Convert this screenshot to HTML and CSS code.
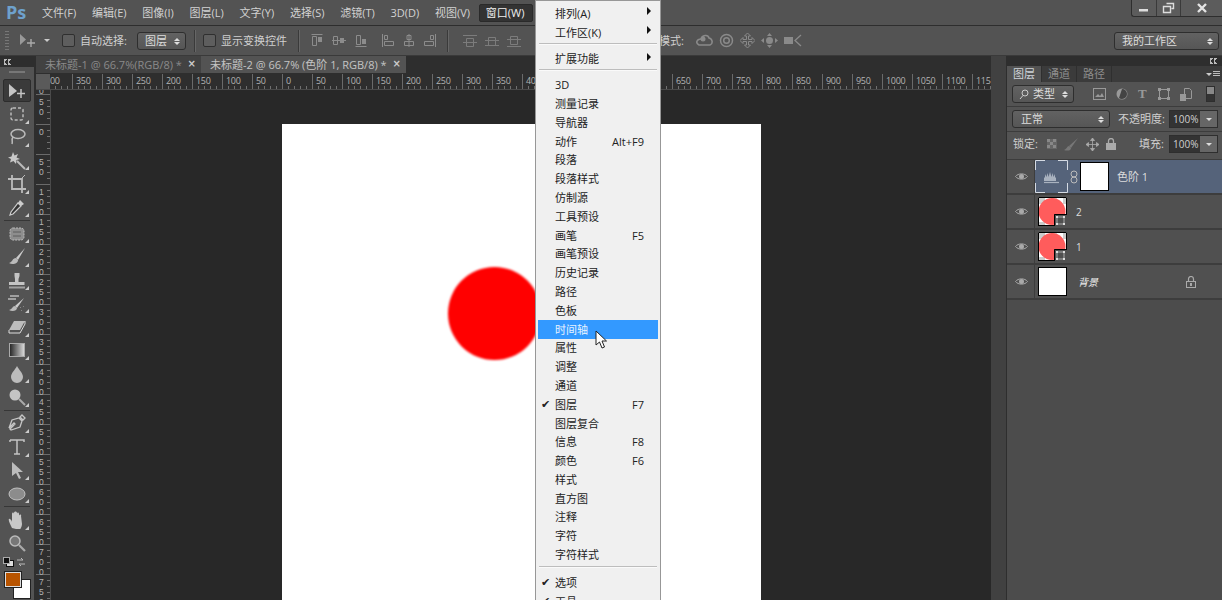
FILE: index.html
```html
<!DOCTYPE html>
<html lang="zh">
<head>
<meta charset="utf-8">
<title>Photoshop</title>
<link rel="stylesheet" href="styles.css">
</head>
<body>
<div class="app">
  <header class="menubar">
    <span class="logo">Ps</span>
    <nav class="menus">
      <span class="m">文件(F)</span><span class="m">编辑(E)</span><span class="m">图像(I)</span><span class="m">图层(L)</span><span class="m">文字(Y)</span><span class="m">选择(S)</span><span class="m">滤镜(T)</span><span class="m">3D(D)</span><span class="m">视图(V)</span><span class="m active">窗口(W)</span>
    </nav>
    <div class="winbtns">
      <span class="wb w1"><svg width="12" height="12" viewBox="0 0 12 12"><rect x="1" y="7" width="9" height="2.500" fill="#ddd"/></svg></span>
      <span class="wb w2"><svg width="13" height="12" viewBox="0 0 13 12"><path d="M4.500 1.500h7v5h-2M1.500 4.500h7v6h-7z" fill="none" stroke="#ddd" stroke-width="1.400"/></svg></span>
      <span class="wb w3"><svg width="12" height="12" viewBox="0 0 12 12"><path d="M2 2l8 8M10 2l-8 8" stroke="#e4e4e4" stroke-width="2.400"/></svg></span>
    </div>
  </header>

  <section class="options">
    <span class="grip"></span>
    <svg class="opt-move" width="18" height="16" viewBox="0 0 18 16"><path d="M1 1l6 5.500-6 5.500z" fill="#999"/><path d="M12 6v8M8 10h8" stroke="#aaa" stroke-width="1.400"/></svg>
    <span class="caret"></span>
    <span class="check c1"></span><span class="otext">自动选择:</span>
    <span class="select s1">图层<i class="updown"></i></span>
    <span class="odiv"></span>
    <span class="check"></span><span class="otext">显示变换控件</span>
    <span class="odiv d2"></span>
    <div class="aligns">
      <svg width="12" height="13" viewBox="0 0 12 13"><path d="M0.500 0.500h11M1.500 2.500h4v9h-4z" fill="none" stroke="#8c8c8c"/><rect x="7" y="3" width="4" height="5" fill="#8c8c8c"/></svg>
      <svg width="14" height="13" viewBox="0 0 14 13"><path d="M1.500 2.500h4v8h-4zM0 6.500h14" fill="none" stroke="#8c8c8c"/><rect x="8" y="4" width="4" height="5" fill="#8c8c8c"/></svg>
      <svg width="12" height="13" viewBox="0 0 12 13"><path d="M0.500 12.500h11M1.500 1.500h4v9h-4z" fill="none" stroke="#8c8c8c"/><rect x="7" y="5" width="4" height="5" fill="#8c8c8c"/></svg>
      <svg class="g" width="12" height="13" viewBox="0 0 12 13"><path d="M0.500 0v13M2.500 1.500h3v4h-3zM2.500 7.500h9v4h-9z" fill="none" stroke="#8c8c8c"/></svg>
      <svg width="12" height="13" viewBox="0 0 12 13"><path d="M6 0v13M4 1.500h4v4h-4zM1.500 7.500h9v4h-9z" fill="none" stroke="#8c8c8c"/></svg>
      <svg width="12" height="13" viewBox="0 0 12 13"><path d="M11.500 0v13M6.500 1.500h3v4h-3zM0.500 7.500h9v4h-9z" fill="none" stroke="#8c8c8c"/></svg>
    </div>
    <span class="odiv d3"></span>
    <div class="dists">
      <svg width="14" height="12" viewBox="0 0 14 12"><path d="M0 0.500h14M0 7.500h14M3.500 3.500h7v8h-7z" fill="none" stroke="#7c7c7c"/></svg>
      <svg width="14" height="12" viewBox="0 0 14 12"><path d="M0 5.500h14M0 10.500h14M3.500 2.500h7v8h-7z" fill="none" stroke="#7c7c7c"/></svg>
      <svg width="14" height="12" viewBox="0 0 14 12"><path d="M0 4.500h14M0 11.500h14M3.500 1.500h7v8h-7z" fill="none" stroke="#7c7c7c"/></svg>
    </div>
    <span class="otext mode">模式:</span>
    <div class="modes">
      <svg width="17" height="15" viewBox="0 0 17 15"><path d="M3 12c-4-2-2-6 2-6 1-4 7-5 8-1 4 1 4 6 1 7z" fill="none" stroke="#8a8a8a" stroke-width="1.600"/><circle cx="7" cy="6" r="2.500" fill="#8a8a8a"/></svg>
      <svg width="15" height="15" viewBox="0 0 15 15"><circle cx="7.500" cy="7.500" r="6" fill="none" stroke="#8a8a8a" stroke-width="1.500"/><circle cx="7.500" cy="7.500" r="2.800" fill="none" stroke="#8a8a8a" stroke-width="1.500"/></svg>
      <svg width="15" height="15" viewBox="0 0 15 15"><path d="M7.500 0l3 3h-2v3.500h3.500v-2l3 3-3 3v-2h-3.500v3.500h2l-3 3-3-3h2v-3.500h-3.500v2l-3-3 3-3v2h3.500v-3.500h-2z" fill="none" stroke="#8a8a8a"/></svg>
      <svg width="17" height="15" viewBox="0 0 17 15"><circle cx="8.500" cy="7.500" r="3.500" fill="#8a8a8a"/><path d="M8.500 0l2.500 3h-5zM8.500 15l-2.500-3h5zM0 7.500l3-2.500v5zM17 7.500l-3-2.500v5z" fill="#8a8a8a"/></svg>
      <svg width="18" height="13" viewBox="0 0 18 13"><rect x="0" y="3" width="9" height="7" fill="#8a8a8a"/><path d="M17 1l-6 5.500 6 5.500" fill="none" stroke="#8a8a8a" stroke-width="1.300"/></svg>
    </div>
    <span class="select workspace">我的工作区<i class="updown"></i></span>
  </section>

  <div class="workarea">
    <aside class="toolbar">
      <div class="dock"><i class="dbl"></i></div>
      <div class="toolgrip"></div>
      <div class="tool on"><svg width="20" height="16" viewBox="0 0 20 16"><path d="M2 1l8 7-8 6z" fill="#c4c4c4"/><path d="M14 6v9M10 10.500h8" stroke="#c4c4c4" stroke-width="1.500"/></svg></div>
      <div class="tool more"><svg width="16" height="16" viewBox="0 0 16 16"><rect x="2" y="2" width="12" height="12" rx="2" fill="none" stroke="#bbb" stroke-width="1.500" stroke-dasharray="3 2"/></svg></div>
      <div class="tool more"><svg width="18" height="18" viewBox="0 0 18 18"><ellipse cx="10" cy="6" rx="7" ry="4.500" fill="none" stroke="#bbb" stroke-width="1.500"/><path d="M5 9c-2 3 0 4-1 7" fill="none" stroke="#bbb" stroke-width="1.500"/></svg></div>
      <div class="tool more"><svg width="20" height="20" viewBox="0 0 20 20"><path d="M6 1l1.500 3.500L11 3 9.500 6.500 13 8l-3.500 1L9 13 6.500 10 3 11.500 4 8 1 6.500 4.500 5.500z" fill="#c8c8c8"/><path d="M10 10l8 8" stroke="#bbb" stroke-width="2"/></svg></div>
      <div class="tool more"><svg width="18" height="18" viewBox="0 0 18 18"><path d="M4 0v14h14M0 4h14v14" fill="none" stroke="#bbb" stroke-width="1.800"/><path d="M14 3l3-3" stroke="#bbb"/></svg></div>
      <div class="tool more"><svg width="18" height="18" viewBox="0 0 18 18"><path d="M12 2l4 4-3 2-3-3z" fill="#ccc"/><path d="M10 5l3 3-8 8-3 1 1-3z" fill="#333" stroke="#ccc" stroke-width="1.200"/></svg></div>
      <div class="toolsep"></div>
      <div class="tool more"><svg width="18" height="16" viewBox="0 0 18 16"><rect x="2" y="2" width="14" height="12" rx="3" fill="#8d8d8d" stroke="#bbb" stroke-dasharray="2 1"/><path d="M5 6h8M5 10h8" stroke="#5c5c5c"/></svg></div>
      <div class="tool more"><svg width="20" height="20" viewBox="0 0 20 20"><path d="M18 1L9 11l2 2z" fill="#ccc"/><path d="M9 11c-4 0-3 4-7 5 3 2 9 1 9-3z" fill="#bbb"/></svg></div>
      <div class="tool more"><svg width="18" height="19" viewBox="0 0 18 19"><path d="M6.500 2h5v3l-1 3v3h6v3H1v-3h6V8L6.500 5z" fill="#c4c4c4"/><rect x="1" y="15.500" width="16" height="2" fill="#a0a0a0"/></svg></div>
      <div class="tool more"><svg width="20" height="18" viewBox="0 0 20 18"><path d="M3 1h9M1 4h8" stroke="#bbb" stroke-width="1.500"/><path d="M17 3L8 11l2 2z" fill="#ccc"/><path d="M8 11c-3 0-2 3-6 4 3 2 8 1 8-2z" fill="#bbb"/><path d="M13 12l1 1m2-2l1 1m-3 3l1 1" stroke="#888"/></svg></div>
      <div class="tool more"><svg width="20" height="16" viewBox="0 0 20 16"><path d="M7 2h11l-5 9H2z" fill="#bdbdbd"/><path d="M2 11l0 3h11l5-9v-3" fill="none" stroke="#ddd"/></svg></div>
      <div class="tool more"><svg width="16" height="14" viewBox="0 0 16 14"><defs><linearGradient id="gr"><stop offset="0" stop-color="#222"/><stop offset="1" stop-color="#ddd"/></linearGradient></defs><rect x="0.500" y="0.500" width="15" height="13" fill="url(#gr)" stroke="#aaa"/></svg></div>
      <div class="tool more"><svg width="14" height="18" viewBox="0 0 14 18"><path d="M7 1c2 4 6 7 6 11a6 6 0 0 1-12 0c0-4 4-7 6-11z" fill="#bcbcbc"/></svg></div>
      <div class="tool more"><svg width="18" height="18" viewBox="0 0 18 18"><circle cx="7" cy="7" r="5.500" fill="#c4c4c4"/><path d="M11 11l6 6" stroke="#aaa" stroke-width="2"/></svg></div>
      <div class="toolsep"></div>
      <div class="tool more"><svg width="18" height="18" viewBox="0 0 18 18"><path d="M14 1l3 3-2 2-3-3zM11 4l3 3-2 6-9 3-1-1 5-5-1-1-5 5 0 0 3-8z" fill="none" stroke="#c6c6c6" stroke-width="1.300"/></svg></div>
      <div class="tool more"><svg width="18" height="18" viewBox="0 0 18 18"><path d="M2 2h14v2M2 2v2M9 2v14M6 16h6" fill="none" stroke="#c4c4c4" stroke-width="1.500"/></svg></div>
      <div class="tool more"><svg width="14" height="18" viewBox="0 0 14 18"><path d="M2 1l11 10-5 0 3 6-2 1-3-6-4 3z" fill="#bcbcbc"/></svg></div>
      <div class="tool more"><svg width="18" height="14" viewBox="0 0 18 14"><ellipse cx="9" cy="7" rx="8" ry="6" fill="#8c8c8c" stroke="#c0c0c0"/></svg></div>
      <div class="toolsep"></div>
      <div class="tool more"><svg width="18" height="18" viewBox="0 0 18 18"><path d="M4 17C2 13 0 9 1 8s3 2 3 3V3c0-2 2-2 2 0v4-5c0-2 3-2 3 0v5-4c0-2 2-2 2 0v5-3c0-2 3-2 2 0l1 8c0 3-2 5-2 6z" fill="#c8c8c8"/></svg></div>
      <div class="tool"><svg width="18" height="18" viewBox="0 0 18 18"><circle cx="7" cy="7" r="5" fill="#777" stroke="#bbb" stroke-width="1.500"/><path d="M11 11l6 6" stroke="#aaa" stroke-width="2.200"/></svg></div>
      <div class="minis">
        <svg width="11" height="10" viewBox="0 0 11 10"><rect x="3.500" y="3.500" width="7" height="6" fill="#ddd" stroke="#111"/><rect x="0.500" y="0.500" width="6" height="6" fill="#111" stroke="#aaa"/></svg>
        <svg width="10" height="10" viewBox="0 0 10 10"><path d="M1 3h6l-2-2M9 7H3l2 2" fill="none" stroke="#bbb"/></svg>
      </div>
      <div class="swatches"><span class="fg"></span><span class="bg"></span></div>
    </aside>

    <main class="doc">
      <div class="tabs">
        <span class="tab">未标题-1 @ 66.7%(RGB/8) *<b>×</b></span>
        <span class="tab cur">未标题-2 @ 66.7% (色阶 1, RGB/8) *<b>×</b></span>
      </div>
      <div class="ruler-row">
        <span class="corner"></span>
        <div class="hruler">
          <span class="stub">00</span><span>350</span><span>300</span><span>250</span><span>200</span><span>150</span><span>100</span><span>50</span><span>0</span><span>50</span><span>100</span><span>150</span><span>200</span><span>250</span><span>300</span><span>350</span><span>40</span><span></span><span></span><span></span><span></span><span>650</span><span>700</span><span>750</span><span>800</span><span>850</span><span>900</span><span>950</span><span>1000</span><span>1050</span><span>1100</span><span>115</span>
        </div>
      </div>
      <div class="stage">
        <div class="vruler">
          <span class="stub">0</span><span>5<br>0</span><span>0</span><span>5<br>0</span><span>1<br>0<br>0</span><span>1<br>5<br>0</span><span>2<br>0<br>0</span><span>2<br>5<br>0</span><span>3<br>0<br>0</span><span>3<br>5<br>0</span><span>4<br>0<br>0</span><span>4<br>5<br>0</span><span>5<br>0<br>0</span><span>5<br>5<br>0</span><span>6<br>0<br>0</span><span>6<br>5<br>0</span><span>7<br>0<br>0</span><span>7<br>5<br>0</span>
        </div>
        <div class="canvas">
          <div class="page"><span class="circle"></span></div>
        </div>
      </div>
    </main>

    <div class="gutter"></div>

    <aside class="panel">
      <div class="dock right"><i class="dbl"></i></div>
      <div class="ptabs">
        <span class="ptab cur">图层</span><span class="ptab">通道</span><span class="ptab">路径</span>
        <span class="pmenu"><i></i><u></u></span>
      </div>
      <div class="prow filter">
        <span class="select fsel"><svg width="10" height="11" viewBox="0 0 10 11"><circle cx="6" cy="4" r="3" fill="none" stroke="#ccc"/><path d="M4 6.500L1 10" stroke="#ccc"/></svg><em>类型</em><i class="updown"></i></span>
        <div class="ficons">
          <svg width="13" height="12" viewBox="0 0 13 12"><rect x="0.500" y="0.500" width="12" height="11" fill="none" stroke="#999"/><path d="M2 9l3-3 2 2 2-3 2 4z" fill="#999"/></svg>
          <svg width="12" height="12" viewBox="0 0 12 12"><circle cx="6" cy="6" r="5.500" fill="#999"/><path d="M6 1a5 5 0 0 1 0 10 6 6 0 0 1-3-1z" fill="#444"/></svg>
          <span class="ft">T</span>
          <svg width="12" height="12" viewBox="0 0 12 12"><path d="M1.500 1.500h9v9h-9z" fill="none" stroke="#999"/><path d="M0 0h3v3H0zM9 0h3v3H9zM0 9h3v3H0zM9 9h3v3H9z" fill="#999"/></svg>
          <svg width="12" height="13" viewBox="0 0 12 13"><path d="M4.500 0.500h5l2 2v8h-7z" fill="none" stroke="#999"/><rect x="0" y="6" width="6" height="7" fill="#999"/></svg>
        </div>
        <span class="toggle"><i></i><i></i></span>
      </div>
      <div class="prow blend">
        <span class="select bsel">正常<i class="updown"></i></span>
        <span class="plabel">不透明度:</span>
        <span class="num">100%<i></i></span>
      </div>
      <div class="prow lock">
        <span class="plabel">锁定:</span>
        <div class="licons">
          <svg width="10" height="10" viewBox="0 0 10 10"><rect width="10" height="10" fill="#666"/><path d="M0 0h3v3H0zM6 0h3v3H6zM3 3h3v3H3zM0 6h3v3H0zM6 6h3v3H6z" fill="#888"/></svg>
          <svg width="15" height="13" viewBox="0 0 15 13"><path d="M14 0L5 8l2 2z" fill="#777"/><path d="M5 8c-2 0-2 3-5 4 3 1 7 1 7-2z" fill="#777"/></svg>
          <svg width="13" height="13" viewBox="0 0 13 13"><path d="M6.500 0v13M0 6.500h13M6.500 0l-2 2.500h4zM6.500 13l-2-2.500h4zM0 6.500l2.500-2v4zM13 6.500l-2.500-2v4z" fill="#aaa" stroke="#aaa" stroke-width="0.800"/></svg>
          <svg width="10" height="12" viewBox="0 0 10 12"><path d="M2.500 5V3a2.500 2.500 0 0 1 5 0v2" fill="none" stroke="#aaa" stroke-width="1.300"/><rect y="5" width="10" height="7" fill="#aaa"/></svg>
        </div>
        <span class="plabel fill">填充:</span>
        <span class="num">100%<i></i></span>
      </div>
      <div class="layers">
        <div class="layer sel">
          <span class="eye"><svg width="13" height="9" viewBox="0 0 13 9"><path d="M0.500 4.500C3 1 10 1 12.500 4.500 10 8 3 8 0.500 4.500z" fill="none" stroke="#aaa"/><circle cx="6.500" cy="4.500" r="2.500" fill="#aaa"/></svg></span>
          <span class="adj"><svg width="33" height="33" viewBox="0 0 33 33"><path d="M0.500 10V0.500H10M23 0.500h9.500V10M32.500 23v9.500H23M10 32.500H0.500V23" fill="none" stroke="#d5dbe4"/><path d="M9 21V17l1 1v-4l1.500 3 1-4 1 4 1.500-5 1.500 5 1-4 1 4 1.500-3v4l1-1v4z" fill="#a9b2bf"/><path d="M9 22.500h15" stroke="#a9b2bf" stroke-width="1.200"/></svg></span>
          <span class="link"><svg width="8" height="14" viewBox="0 0 8 14"><rect x="1" y="1" width="6" height="6" rx="3" fill="none" stroke="#bbb"/><rect x="1" y="7" width="6" height="6" rx="3" fill="none" stroke="#bbb"/></svg></span>
          <span class="mask"></span>
          <span class="lname n1">色阶 1</span>
        </div>
        <div class="layer">
          <span class="eye"><svg width="13" height="9" viewBox="0 0 13 9"><path d="M0.500 4.500C3 1 10 1 12.500 4.500 10 8 3 8 0.500 4.500z" fill="none" stroke="#aaa"/><circle cx="6.500" cy="4.500" r="2.500" fill="#aaa"/></svg></span>
          <svg class="thumb" width="29" height="29" viewBox="0 0 29 29"><rect width="29" height="29" fill="#fff"/><path d="M1 1h6v6H1zM13 1h6v6h-6zM25 1h3v6h-3zM7 7h6v6H7zM1 13h6v6H1zM1 25h6v3H1z" fill="#ccc"/><circle cx="14" cy="14.500" r="13.500" fill="#ff5c5c"/><path d="M29 29H16V17h13z" fill="#505050"/><path d="M16.500 29V17.500H29" fill="none" stroke="#000"/><rect x="19" y="20" width="7" height="7" fill="none" stroke="#aaa"/><path d="M18 19h2v2h-2zM25 19h2v2h-2zM18 26h2v2h-2zM25 26h2v2h-2z" fill="#ddd"/><path d="M0.500 29V0.500H28.500V17M16 28.500H0.500" fill="none" stroke="#000"/></svg>
          <span class="lname">2</span>
        </div>
        <div class="layer">
          <span class="eye"><svg width="13" height="9" viewBox="0 0 13 9"><path d="M0.500 4.500C3 1 10 1 12.500 4.500 10 8 3 8 0.500 4.500z" fill="none" stroke="#aaa"/><circle cx="6.500" cy="4.500" r="2.500" fill="#aaa"/></svg></span>
          <svg class="thumb" width="29" height="29" viewBox="0 0 29 29"><rect width="29" height="29" fill="#fff"/><path d="M1 1h6v6H1zM13 1h6v6h-6zM25 1h3v6h-3zM7 7h6v6H7zM1 13h6v6H1zM1 25h6v3H1z" fill="#ccc"/><circle cx="14" cy="14.500" r="13.500" fill="#ff5c5c"/><path d="M29 29H16V17h13z" fill="#505050"/><path d="M16.500 29V17.500H29" fill="none" stroke="#000"/><rect x="19" y="20" width="7" height="7" fill="none" stroke="#aaa"/><path d="M18 19h2v2h-2zM25 19h2v2h-2zM18 26h2v2h-2zM25 26h2v2h-2z" fill="#ddd"/><path d="M0.500 29V0.500H28.500V17M16 28.500H0.500" fill="none" stroke="#000"/></svg>
          <span class="lname">1</span>
        </div>
        <div class="layer">
          <span class="eye"><svg width="13" height="9" viewBox="0 0 13 9"><path d="M0.500 4.500C3 1 10 1 12.500 4.500 10 8 3 8 0.500 4.500z" fill="none" stroke="#aaa"/><circle cx="6.500" cy="4.500" r="2.500" fill="#aaa"/></svg></span>
          <span class="bgthumb"></span>
          <span class="lname ital">背景</span>
          <svg class="padlock" width="10" height="12" viewBox="0 0 10 12"><path d="M2.500 5V3a2.500 2.500 0 0 1 5 0v2" fill="none" stroke="#aaa" stroke-width="1.200"/><rect x="0.500" y="5.500" width="9" height="6" fill="none" stroke="#aaa"/><rect x="4" y="7" width="2" height="3" fill="#aaa"/></svg>
        </div>
      </div>
    </aside>
  </div>

  <div class="menu">
    <div class="mi sub">排列(A)<i class="arr"></i></div>
    <div class="mi sub">工作区(K)<i class="arr"></i></div>
    <div class="msep a"></div>
    <div class="mi sub">扩展功能<i class="arr"></i></div>
    <div class="msep b"></div>
    <div class="mi">3D</div>
    <div class="mi">测量记录</div>
    <div class="mi">导航器</div>
    <div class="mi">动作<kbd>Alt+F9</kbd></div>
    <div class="mi">段落</div>
    <div class="mi">段落样式</div>
    <div class="mi">仿制源</div>
    <div class="mi">工具预设</div>
    <div class="mi">画笔<kbd>F5</kbd></div>
    <div class="mi">画笔预设</div>
    <div class="mi">历史记录</div>
    <div class="mi">路径</div>
    <div class="mi">色板</div>
    <div class="mi hot">时间轴</div>
    <div class="mi">属性</div>
    <div class="mi">调整</div>
    <div class="mi">通道</div>
    <div class="mi on">图层<kbd>F7</kbd></div>
    <div class="mi">图层复合</div>
    <div class="mi">信息<kbd>F8</kbd></div>
    <div class="mi">颜色<kbd>F6</kbd></div>
    <div class="mi">样式</div>
    <div class="mi">直方图</div>
    <div class="mi">注释</div>
    <div class="mi">字符</div>
    <div class="mi">字符样式</div>
    <div class="msep a end"></div>
    <div class="mi on">选项</div>
    <div class="mi on">工具</div>
  </div>
  <svg class="cursor" width="14" height="20" viewBox="0 0 14 20"><path d="M1 1v14l3.500-3 2.500 6 2.500-1-2.500-6h4.500z" fill="#fff" stroke="#222"/></svg>
</div>
</body>
</html>
```
FILE: styles.css
```css
* { box-sizing: border-box; }
html, body { margin: 0; height: 100%; overflow: hidden; background: #535353; }
body { font: 11px/1.2 "Open Sans", "Noto Sans CJK SC", sans-serif; color: #d2d2d2; }
svg { display: block; flex: none; }

.app { position: relative; width: 1222px; height: 600px; overflow: hidden; display: flex; flex-direction: column; }

/* menu bar */
.menubar { height: 26px; flex: none; display: flex; align-items: flex-start; background: #535353; border-bottom: 1px solid #2e2e2e; }
.logo { width: 34px; padding: 2px 0 0 6px; font: bold 18px/20px "Open Sans", sans-serif; color: #6ea1cc; }
.menus { display: flex; padding-top: 4px; padding-left: 1px; }
.m { margin-right: 8.750px; padding: 2px 0 0 7px; height: 18px; font-size: 11px; line-height: 14px; white-space: nowrap; }
.m.active { margin: 0; padding: 1px 0 0 6px; background: #333; border: 1px solid #2a2a2a; border-radius: 2px; color: #eee; width: 54px; }
.winbtns { margin-left: auto; display: flex; height: 17px; border: 1px solid #2e2e2e; border-top: 0; border-right: 0; border-radius: 0 0 0 3px; background: #5c5c5c; }
.wb { display: flex; align-items: center; justify-content: center; border-right: 1px solid #3a3a3a; }
.w1 { width: 25px; } .w2 { width: 24px; } .w3 { width: 41px; border-right: 0; }

/* options */
.options { height: 30px; flex: none; display: flex; align-items: center; background: #535353; border-bottom: 1px solid #3a3a3a; padding-left: 5px; }
.grip { width: 4px; height: 20px; margin-right: 10px; background: repeating-linear-gradient(#777 0 1px, transparent 1px 3px); }
.opt-move { margin-right: 7px; }
.caret { width: 0; height: 0; border: 3px solid transparent; border-top: 3px solid #ccc; border-bottom: 0; margin-right: 12px; }
.check { width: 13px; height: 13px; flex: none; margin-right: 5px; border: 1px solid #2f2f2f; border-radius: 2px; background: #5e5e5e; }
.otext { font-size: 11px; white-space: nowrap; color: #d0d0d0; }
.select { position: relative; display: flex; align-items: center; height: 18px; flex: none; border: 1px solid #2e2e2e; border-radius: 3px; background: linear-gradient(#626262, #565656); color: #ddd; white-space: nowrap; }
.updown { position: absolute; right: 5px; top: 4px; width: 6px; height: 9px; }
.updown::before, .updown::after { content: ""; position: absolute; left: 0; border: 3px solid transparent; }
.updown::before { top: -2px; border-bottom-color: #ddd; }
.updown::after { bottom: -2px; border-top-color: #ddd; }
.s1 { width: 49px; margin-left: 10px; padding-left: 7px; }
.odiv { height: 22px; background: #3a3a3a; border-right: 1px solid #666; width: 2px; margin: 0 7px 0 8px; }
.d2 { margin: 0 11px 0 11px; }
.aligns { display: flex; gap: 9px; align-items: center; }
.aligns .g { margin-left: 6px; }
.d3 { margin: 0 14px 0 11px; }
.dists { display: flex; gap: 8px; width: 196px; }
.mode { margin-right: 12px; }
.modes { display: flex; gap: 6px; align-items: center; }
.workspace { width: 105px; margin-left: auto; margin-right: 3px; padding-left: 7px; }

/* work area */
.workarea { flex: 1; min-height: 0; display: flex; }
.toolbar { width: 36px; flex: none; background: #535353; border-right: 2px solid #2e2e2e; }
.dock { height: 11px; background: #2e2e2e; display: flex; align-items: center; padding: 0 4px; }
.dock.right { height: 10px; justify-content: flex-end; }
.dbl { width: 8px; height: 6px; background: linear-gradient(135deg, #bbb 50%, transparent 50%) 0 0 / 4px 3px no-repeat, linear-gradient(45deg, #bbb 50%, transparent 50%) 0 3px / 4px 3px no-repeat, linear-gradient(135deg, #bbb 50%, transparent 50%) 4px 0 / 4px 3px no-repeat, linear-gradient(45deg, #bbb 50%, transparent 50%) 4px 3px / 4px 3px no-repeat; }
.toolgrip { height: 12px; margin: 0 9px; background: linear-gradient(#777, #777) 0 4px / 100% 2px no-repeat; }
.tool { position: relative; height: 23.350px; display: flex; align-items: center; justify-content: center; }
.tool.on { margin: 0 3px; background: #3a3a3a; border: 1px solid #2c2c2c; border-radius: 2px; }
.tool.more::after { content: ""; position: absolute; right: 5px; bottom: 2px; border: 2px solid transparent; border-right-color: #ccc; border-bottom-color: #ccc; }
.toolsep { height: 3px; margin: 0 4px; background: linear-gradient(#363636, #363636) 0 1px / 100% 1px no-repeat; }
.minis { display: flex; justify-content: space-between; padding: 2px 8px 0 3px; }
.swatches { position: relative; height: 30px; margin-top: 3px; }
.fg { position: absolute; left: 4px; top: 1px; width: 18px; height: 17px; z-index: 1; background: #b85400; border: 1px solid #222; outline: 1px solid #ddd; outline-offset: -2px; }
.bg { position: absolute; left: 13px; top: 9px; width: 18px; height: 20px; background: #fff; border: 1px solid #222; }

/* document */
.doc { flex: none; width: 955px; display: flex; flex-direction: column; background: #282828; min-height: 0; }
.tabs { height: 18px; flex: none; display: flex; background: #2e2e2e; }
.tab { position: relative; display: flex; align-items: center; height: 17px; padding-left: 9px; width: 165px; background: #424242; color: #8a8a8a; white-space: nowrap; font-size: 11px; }
.tab.cur { width: 205px; background: #535353; color: #c4c4c4; }
.tab b { position: absolute; right: 5px; top: 1px; font: bold 10px/14px "DejaVu Sans", sans-serif; color: #ccc; }
.ruler-row { height: 16px; flex: none; display: flex; background: #2e2e2e; border-bottom: 1px solid #4a4a4a; }
.corner { width: 14px; flex: none; background: #5a5a5a; }
.hruler { flex: 1; overflow: hidden; display: flex; }
.hruler span { flex: none; width: 30px; height: 15px; padding-left: 3px; border-left: 1px solid #6a6a6a; font: 9px/13px "Open Sans", sans-serif; letter-spacing: -0.300px; color: #b4b4b4; white-space: nowrap; background: repeating-linear-gradient(90deg, transparent 0 5px, #707070 5px 6px) 0 100% / 100% 3px no-repeat; }
.hruler .stub { width: 22px; padding-left: 0; border-left: 0; }
.stage { flex: 1; min-height: 0; display: flex; }
.vruler { width: 15px; flex: none; background: #2e2e2e; border-right: 1px solid #4a4a4a; overflow: hidden; }
.vruler span { display: block; height: 30px; padding: 2px 0 0 3px; border-top: 1px solid #6a6a6a; font: 8.500px/10px "Liberation Sans", sans-serif; color: #b4b4b4; background: repeating-linear-gradient(transparent 0 5px, #707070 5px 6px) 100% 0 / 3px 100% no-repeat; }
.vruler .stub { height: 4px; padding-top: 0; border-top: 0; line-height: 3px; overflow: hidden; }
.canvas { flex: 1; background: #282828; padding: 34px 0 0 231px; overflow: hidden; }
.page { position: relative; width: 479px; height: 600px; background: #fff; }
.circle { position: absolute; left: 165.500px; top: 142.500px; width: 93px; height: 93px; border-radius: 50%; background: #f00; filter: blur(1px); }
.gutter { width: 16px; flex: none; background: #414141; border-right: 1px solid #2e2e2e; }

/* panel */
.panel { flex: 1; min-width: 0; background: #4c4c4c; }
.ptabs { height: 16px; display: flex; background: #3b3b3b; position: relative; }
.ptab { width: 35px; text-align: center; line-height: 16px; font-size: 11px; color: #8e8e8e; border-right: 1px solid #2f2f2f; }
.ptab.cur { background: #535353; color: #cfd4da; }
.pmenu { position: absolute; right: 2px; top: 5px; display: flex; gap: 1px; }
.pmenu i { border: 3px solid transparent; border-top-color: #ccc; border-bottom: 0; margin-top: 2px; }
.pmenu u { width: 7px; height: 6px; background: repeating-linear-gradient(#bbb 0 1px, transparent 1px 2px); }
.prow { display: flex; align-items: center; background: #535353; border-bottom: 1px solid #3c3c3c; }
.filter { height: 25px; padding: 0 4px 0 5px; }
.fsel { width: 62px; padding-left: 6px; }
.fsel em { font-style: normal; margin-left: 4px; color: #ddd; }
.ficons { display: flex; align-items: center; gap: 10px; margin-left: 19px; }
.ft { font: bold 13px/14px "Liberation Serif", serif; color: #999; width: 10px; }
.toggle { margin-left: auto; width: 9px; height: 16px; margin-right: 3px; display: flex; flex-direction: column; border: 1px solid #2e2e2e; }
.toggle i { flex: 1; background: #888; }
.toggle i + i { background: #333; }
.blend { height: 25px; padding-left: 5px; }
.bsel { width: 98px; padding-left: 8px; }
.plabel { font-size: 11px; white-space: nowrap; color: #cfcfcf; }
.blend .plabel { margin-left: 8px; width: 51px; }
.num { position: relative; width: 49px; height: 18px; flex: none; padding-left: 3px; line-height: 16px; background: #333; border: 1px solid #2e2e2e; color: #d0d0d0; font-size: 10px; }
.num i { position: absolute; right: 0; top: 0; width: 17px; height: 16px; background: #666; }
.num i::after { content: ""; position: absolute; left: 6px; top: 7px; border: 3px solid transparent; border-top-color: #ddd; border-bottom: 0; }
.lock { height: 28px; padding: 0 0 3px 6px; }
.lock > .plabel:first-child { width: 34px; }
.licons { display: flex; align-items: center; gap: 7px; width: 92px; }
.fill { width: 30px; }
.layers { display: flex; flex-direction: column; }
.layer { position: relative; height: 35px; display: flex; align-items: center; background: #505050; border-bottom: 2px solid #3d3d3d; }
.layer.sel { background: #55637a; }
.eye { display: flex; width: 28px; height: 100%; padding-left: 8px; align-items: center; border-right: 1px solid #3d3d3d; flex: none; }
.sel .eye { background: #505050; }
.link { margin: 0 2px; }
.mask { width: 29px; height: 29px; background: #fff; border: 1px solid #000; }
.lname { margin-left: 9px; color: #ddd; font-size: 10px; }
.n1 { margin-left: 8px; font-size: 11px; }
.thumb { margin-left: 3px; }
.bgthumb { margin-left: 3px; width: 29px; height: 29px; background: #fff; border: 1px solid #000; }
.ital { font-style: italic; margin-left: 11px; color: #eee; }
.padlock { margin-left: auto; margin-right: 26px; }

/* window menu */
.menu { position: absolute; left: 535px; top: 0; width: 126px; height: 610px; padding: 3px 2px; background: #f0f0f0; border: 1px solid #979797; color: #222; }
.mi { display: flex; align-items: center; height: 18.800px; padding-left: 3px; font-size: 11px; white-space: nowrap; }
.mi::before { content: ""; width: 14px; flex: none; font: 11px/1 "DejaVu Sans", sans-serif; }
.mi.on::before { content: "✔"; }
.mi.hot { background: #3399ff; color: #e8f3ff; }
.mi.sub { padding-right: 7px; }
.arr { margin-left: auto; border: 4px solid transparent; border-left-color: #111; border-right: 0; margin-top: -4px; }
kbd { margin-left: auto; margin-right: 14px; font: 11px "Open Sans", sans-serif; color: #222; }
.msep { height: 2px; margin: 0 1px; background: linear-gradient(#bdbdbd 50%, #fafafa 50%); }
.msep.a { margin-top: 1.400px; margin-bottom: 4.600px; }
.msep.end { margin-top: 2px; margin-bottom: 5.400px; }
.msep.b { margin-top: 0.600px; margin-bottom: 4.400px; }
.cursor { position: absolute; left: 595px; top: 330px; }
```
